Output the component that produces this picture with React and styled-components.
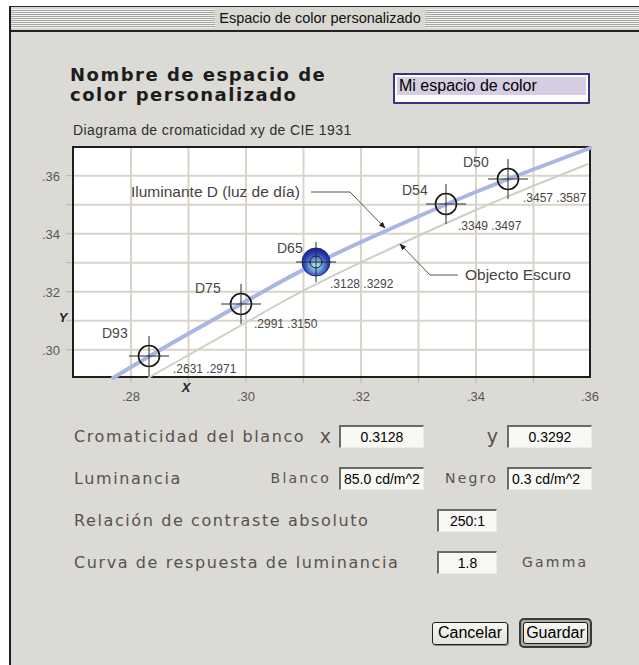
import React from "react";
import styled, { createGlobalStyle } from "styled-components";

const GlobalStyle = createGlobalStyle`
  html, body {
    margin: 0;
    padding: 0;
    background: #ffffff;
  }
  body {
    font-family: "Liberation Sans", Arial, sans-serif;
  }
`;

const smooth = (pts) => {
  let d = `M${pts[0][0]},${pts[0][1]}`;
  for (let i = 1; i < pts.length - 1; i++) {
    const mx = (pts[i][0] + pts[i + 1][0]) / 2;
    const my = (pts[i][1] + pts[i + 1][1]) / 2;
    d += ` Q${pts[i][0]},${pts[i][1]} ${mx},${my}`;
  }
  const last = pts[pts.length - 1];
  d += ` L${last[0]},${last[1]}`;
  return d;
};

const daylight = [
  [113, 378],
  [149, 356],
  [241, 304],
  [316, 262],
  [446, 204],
  [508, 179],
  [590, 148],
];

const darkObject = [
  [148, 378],
  [243, 324],
  [316, 283],
  [446, 223],
  [508, 196],
  [588, 164],
];

const whitePoints = [
  { name: "D93", x: 149, y: 356, lx: 102, ly: 338, vx: 173, vy: 373, value: ".2631 .2971" },
  { name: "D75", x: 241, y: 304, lx: 195, ly: 293, vx: 254, vy: 328, value: ".2991 .3150" },
  { name: "D65", x: 316, y: 262, lx: 277, ly: 253, vx: 330, vy: 288, value: ".3128 .3292", active: true },
  { name: "D54", x: 446, y: 204, lx: 402, ly: 195, vx: 458, vy: 230, value: ".3349 .3497" },
  { name: "D50", x: 508, y: 179, lx: 463, ly: 167, vx: 523, vy: 202, value: ".3457 .3587" },
];

const gridX = [131, 188.5, 246, 303.5, 361, 418.5, 476, 533.5];
const gridY = [175.7, 204.7, 233.7, 262.7, 291.7, 320.7, 349.7];
const yLabels = [
  { y: 175.7, t: ".36" },
  { y: 233.7, t: ".34" },
  { y: 291.7, t: ".32" },
  { y: 349.7, t: ".30" },
];
const xLabels = [
  { x: 131, t: ".28" },
  { x: 246, t: ".30" },
  { x: 361, t: ".32" },
  { x: 476, t: ".34" },
  { x: 590, t: ".36" },
];

const Crosshair = ({ x, y, active }) => (
  <g>
    {active ? (
      <circle cx={x} cy={y} r="14" fill="url(#sphere)" stroke="#1a2a8a" strokeWidth="1" />
    ) : (
      <circle cx={x} cy={y} r="10.5" fill="none" stroke="#151515" strokeWidth="1.6" />
    )}
    <line x1={x - 20} y1={y} x2={x + 20} y2={y} stroke="#2a2a2a" strokeWidth="1" />
    <line x1={x} y1={y - 20} x2={x} y2={y + 20} stroke="#2a2a2a" strokeWidth="1" />
    {active && <circle cx={x} cy={y} r="6" fill="none" stroke="#1a1a40" strokeWidth="1" />}
  </g>
);

const Chart = () => (
  <ChartSvg width="580" height="270" viewBox="35 140 580 270">
    <defs>
      <radialGradient id="sphere" cx="50%" cy="62%" r="60%">
        <stop offset="0" stopColor="#c9f2ef" />
        <stop offset="0.35" stopColor="#6ea6dc" />
        <stop offset="0.7" stopColor="#2c44b2" />
        <stop offset="1" stopColor="#15248a" />
      </radialGradient>
      <marker id="arrow" viewBox="0 0 10 10" refX="9" refY="5" markerWidth="7" markerHeight="7" orient="auto-start-reverse">
        <path d="M0,1 L10,5 L0,9 z" fill="#222" />
      </marker>
    </defs>

    <rect x="73" y="147" width="517" height="230" fill="#ffffff" />
    {gridX.map((x) => (
      <g key={x}>
        <line x1={x} y1="148" x2={x} y2="376" stroke="#d8d4c8" strokeWidth="2" />
        <line x1={x} y1="378" x2={x} y2="383" stroke="#b8b4aa" strokeWidth="1" />
      </g>
    ))}
    {gridY.map((y) => (
      <g key={y}>
        <line x1="74" y1={y} x2="589" y2={y} stroke="#d8d4c8" strokeWidth="2" />
        <line x1="66" y1={y} x2="72" y2={y} stroke="#b8b4aa" strokeWidth="1" />
      </g>
    ))}
    <rect x="73" y="147" width="517" height="230" fill="none" stroke="#1e1e1e" strokeWidth="2" />

    <path d={smooth(darkObject)} fill="none" stroke="#cfcfc6" strokeWidth="2" />
    <path d={smooth(daylight)} fill="none" stroke="#aab5e4" strokeWidth="4" strokeLinecap="round" />

    {whitePoints.map((p) => (
      <g key={p.name}>
        <Crosshair x={p.x} y={p.y} active={p.active} />
        <PointName x={p.lx} y={p.ly}>{p.name}</PointName>
        <PointValue x={p.vx} y={p.vy}>{p.value}</PointValue>
      </g>
    ))}

    <Callout x="131" y="197">Iluminante D (luz de día)</Callout>
    <polyline points="311,192 350,192 385,228" fill="none" stroke="#555" strokeWidth="1" markerEnd="url(#arrow)" />

    <Callout x="465" y="280">Objecto Escuro</Callout>
    <polyline points="458,275 430,275 400,244" fill="none" stroke="#555" strokeWidth="1" markerEnd="url(#arrow)" />

    {yLabels.map((l) => (
      <AxisText key={l.t} x="60" y={l.y + 5} textAnchor="end">{l.t}</AxisText>
    ))}
    {xLabels.map((l) => (
      <AxisText key={l.t} x={l.x} y="401" textAnchor="middle">{l.t}</AxisText>
    ))}
    <AxisName x="63" y="322" textAnchor="middle">Y</AxisName>
    <AxisName x="186" y="392" textAnchor="middle">X</AxisName>
  </ChartSvg>
);

const App = () => (
  <>
    <GlobalStyle />
    <Window>
      <TitleBar>
        <Title>Espacio de color personalizado</Title>
      </TitleBar>
      <Body>
        <Header>
          <Heading>
            Nombre de espacio de
            <br />
            color personalizado
          </Heading>
          <NameField>
            <Selected>Mi espacio de color</Selected>
          </NameField>
        </Header>

        <Caption>Diagrama de cromaticidad xy de CIE 1931</Caption>
        <Chart />

        <Form>
          <PairRow>
            <LabelCell>
              <Label>Cromaticidad del blanco</Label>
              <Label $big>x</Label>
            </LabelCell>
            <Field $align="center">0.3128</Field>
            <LabelCell $end>
              <Label $big>y</Label>
            </LabelCell>
            <Field $align="center">0.3292</Field>
          </PairRow>
          <PairRow>
            <LabelCell>
              <Label>Luminancia</Label>
              <Label $small>Blanco</Label>
            </LabelCell>
            <Field>85.0 cd/m^2</Field>
            <LabelCell $end>
              <Label $small>Negro</Label>
            </LabelCell>
            <Field>0.3 cd/m^2</Field>
          </PairRow>
          <SingleRow>
            <Label>Relación de contraste absoluto</Label>
            <Field $align="center">250:1</Field>
          </SingleRow>
          <SingleRow>
            <Label>Curva de respuesta de luminancia</Label>
            <Field $align="center">1.8</Field>
            <Unit>Gamma</Unit>
          </SingleRow>
        </Form>

        <Buttons>
          <Button>Cancelar</Button>
          <DefaultButton>
            <DefaultInner>Guardar</DefaultInner>
          </DefaultButton>
        </Buttons>
      </Body>
    </Window>
  </>
);

const Window = styled.div`
  margin: 6px 0 0 9px;
  width: 630px;
  height: 659px;
  box-sizing: border-box;
  border-left: 2px solid #1c1c1c;
  border-top: 1px solid #2a2a2a;
  background: #dcdad5;
  overflow: hidden;
`;

const TitleBar = styled.div`
  height: 23px;
  border-bottom: 2px solid #222;
  display: flex;
  align-items: center;
  justify-content: center;
  padding-right: 10px;
  background: repeating-linear-gradient(
        to bottom,
        #f3f3f1 0px,
        #f3f3f1 1px,
        #a4a4a0 1px,
        #a4a4a0 2px
      )
      0 2px / 100% 19px no-repeat,
    #d4d4d0;
`;

const Title = styled.div`
  background: #d9d8d2;
  padding: 0 4px;
  font-family: "Liberation Sans", Arial, sans-serif;
  font-size: 14.5px;
  line-height: 21px;
  color: #111;
`;

const Body = styled.div`
  display: flex;
  flex-direction: column;
  padding-left: 24px;
`;

const Header = styled.div`
  display: flex;
  align-items: flex-start;
  margin: 33px 0 0 35px;
`;

const Heading = styled.h1`
  margin: 0;
  width: 323px;
  font-family: "DejaVu Sans", Verdana, sans-serif;
  font-weight: 700;
  font-size: 18px;
  line-height: 20px;
  letter-spacing: 1.5px;
  color: #1c1c1c;
`;

const NameField = styled.div`
  margin-top: 8px;
  width: 197px;
  height: 31px;
  box-sizing: border-box;
  border: 2px solid #3a3188;
  border-radius: 1px;
  background: #ffffff;
  padding: 2px 2px 0 2px;
`;

const Selected = styled.div`
  height: 18px;
  background: #d6cce4;
  padding-left: 2px;
  font-family: "Liberation Sans", Arial, sans-serif;
  font-size: 16px;
  line-height: 18px;
  color: #000;
`;

const Caption = styled.div`
  margin: 17px 0 0 38px;
  font-family: "Liberation Sans", Arial, sans-serif;
  font-size: 14px;
  letter-spacing: 0.4px;
  line-height: 16px;
  color: #2e2e2e;
`;

const ChartSvg = styled.svg`
  display: block;
  margin-top: 2px;
`;

const PointName = styled.text`
  font-family: "Liberation Sans", Arial, sans-serif;
  font-size: 14px;
  fill: #4a4646;
`;

const PointValue = styled.text`
  font-family: "Liberation Sans", Arial, sans-serif;
  font-size: 12px;
  fill: #4a4646;
`;

const Callout = styled.text`
  font-family: "Liberation Sans", Arial, sans-serif;
  font-size: 15.5px;
  fill: #474242;
`;

const AxisText = styled.text`
  font-family: "Liberation Sans", Arial, sans-serif;
  font-size: 13px;
  fill: #5a5656;
`;

const AxisName = styled.text`
  font-family: "Liberation Sans", Arial, sans-serif;
  font-size: 13px;
  font-style: italic;
  font-weight: 700;
  fill: #222;
`;

const Form = styled.div`
  margin: 5px 0 0 39px;
  display: flex;
  flex-direction: column;
`;

const PairRow = styled.div`
  height: 42px;
  display: grid;
  grid-template-columns: 265px 85px 83px 85px;
  align-items: center;
`;

const SingleRow = styled.div`
  height: 42px;
  display: grid;
  grid-template-columns: 363px 60px auto;
  align-items: center;
`;

const LabelCell = styled.div`
  display: flex;
  align-items: center;
  justify-content: ${(p) => (p.$end ? "flex-end" : "space-between")};
  padding-right: ${(p) => (p.$end ? "9px" : "8px")};
`;

const Label = styled.span`
  font-family: "DejaVu Sans", Verdana, sans-serif;
  font-size: ${(p) => (p.$small ? "14px" : p.$big ? "19px" : "16px")};
  letter-spacing: ${(p) => (p.$big ? "0" : p.$small ? "2.2px" : "1.6px")};
  color: #56524c;
  white-space: nowrap;
`;

const Unit = styled(Label).attrs({ $small: true })`
  margin-left: 25px;
`;

const Field = styled.div`
  height: 23px;
  box-sizing: border-box;
  border-top: 2px solid #6a6a66;
  border-left: 2px solid #6a6a66;
  border-right: 1px solid #ecebe6;
  border-bottom: 1px solid #ecebe6;
  background: #f8f8f5;
  padding: 0 3px;
  text-align: ${(p) => p.$align || "left"};
  font-family: "Liberation Sans", Arial, sans-serif;
  font-size: 14px;
  line-height: 20px;
  color: #000;
  white-space: nowrap;
`;

const Buttons = styled.div`
  margin: 35px 47px 0 0;
  display: flex;
  justify-content: flex-end;
  align-items: center;
  gap: 11px;
`;

const Button = styled.button`
  width: 76px;
  height: 23px;
  padding: 0;
  box-sizing: border-box;
  border: 1px solid #222;
  border-radius: 3px;
  background: linear-gradient(#f6f6f2, #e4e3de);
  box-shadow: 1px 1px 0 #8a8a86;
  font-family: "Liberation Sans", Arial, sans-serif;
  font-size: 16px;
  line-height: 20px;
  color: #000;
`;

const DefaultButton = styled.button`
  width: 73px;
  height: 30px;
  padding: 2px;
  box-sizing: border-box;
  border: 2px solid #3a3a38;
  border-radius: 5px;
  background: #a9a9a5;
  display: flex;
`;

const DefaultInner = styled.span`
  flex: 1;
  border: 1px solid #1a1a1a;
  border-radius: 3px;
  background: linear-gradient(#f6f6f2, #e4e3de);
  font-family: "Liberation Sans", Arial, sans-serif;
  font-size: 16px;
  line-height: 20px;
  color: #000;
`;

export default App;
